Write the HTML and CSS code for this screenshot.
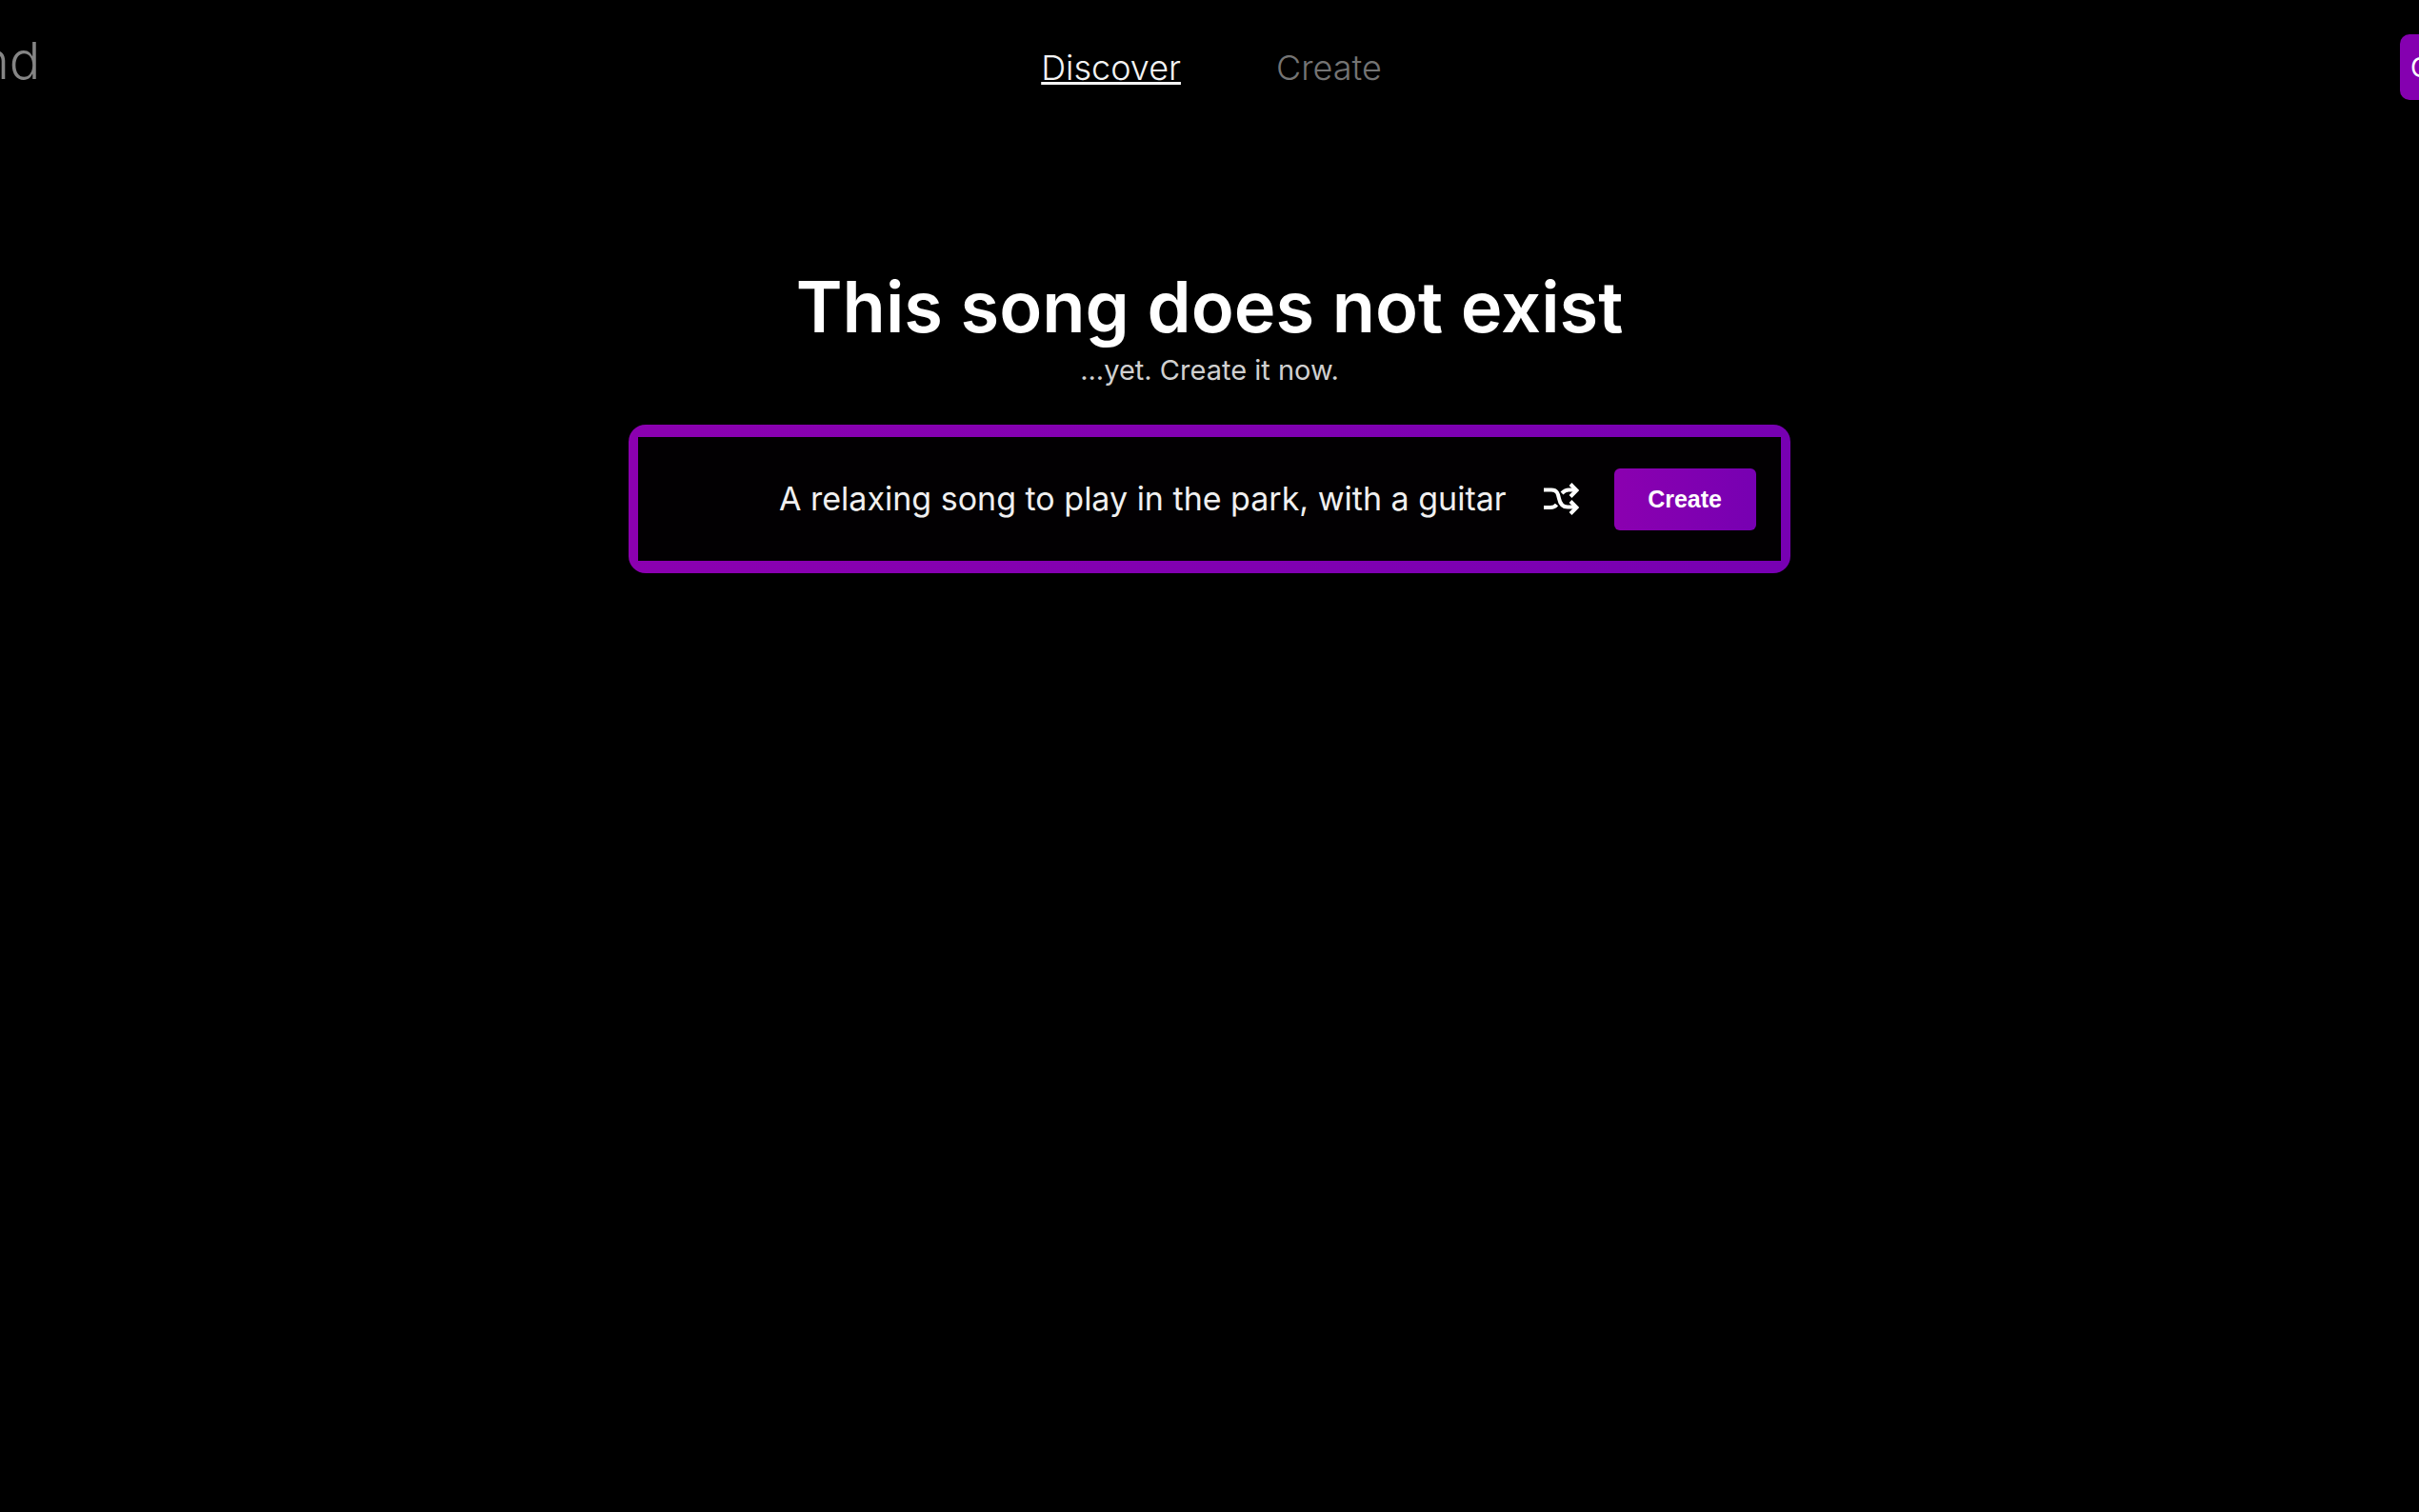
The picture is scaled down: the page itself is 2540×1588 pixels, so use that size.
FILE: index.html
```html
<!DOCTYPE html>
<html lang="en">
<head>
<meta charset="utf-8">
<title>This song does not exist</title>
<link rel="stylesheet" href="styles.css">
</head>
<body>
<header class="header">
  <a class="brand" href="#">nd</a>
  <nav class="nav">
    <a class="nav-link nav-link-active" href="#">Discover</a>
    <a class="nav-link" href="#">Create</a>
  </nav>
  <button class="account" type="button">C</button>
</header>
<main class="main">
  <h1 class="title">This song does not exist</h1>
  <p class="subtitle">...yet. Create it now.</p>
  <form class="prompt">
    <div class="prompt-inner">
      <input class="prompt-input" type="text" aria-label="Song description" value="A relaxing song to play in the park, with a guitar">
      <button class="shuffle" type="button" aria-label="Shuffle">
        <svg class="shuffle-icon" viewBox="0 0 38 34" fill="none" stroke="currentColor" stroke-width="4">
          <path d="M1 7.500h8c6 0 7 4 8 9s3 9 9 9h9M1 26h7c3 0 5-1 6.500-3M20 11c2-2 4-3.500 7-3.500h8"/>
          <path d="M29 1.500l6.500 6.500-6.500 6.500M29 19.500l6.500 6.500-6.500 6.500"/>
        </svg>
      </button>
      <button class="create" type="submit">Create</button>
    </div>
  </form>
</main>
</body>
</html>
```
FILE: styles.css
```css
* {
  box-sizing: border-box;
}

body {
  margin: 0;
  min-height: 100vh;
  overflow-x: hidden;
  background: #000;
  color: #fff;
  font-family: Inter, "Liberation Sans", sans-serif;
}

button,
input {
  border: 0;
  padding: 0;
  background: none;
  color: inherit;
  font-family: inherit;
}

.header {
  display: grid;
  grid-template-columns: 1fr auto 1fr;
  align-items: start;
  height: 142px;
  padding-top: 36px;
  overflow: hidden;
}

.brand {
  justify-self: start;
  margin-left: -22px;
  color: #858585;
  font-size: 54px;
  font-weight: 300;
  line-height: 56px;
  text-decoration: none;
}

.nav {
  display: flex;
  gap: 100px;
  padding-left: 4px;
}

.nav-link {
  color: #747474;
  font-size: 36px;
  font-weight: 300;
  line-height: 70px;
  text-decoration: none;
}

.nav-link-active {
  color: #f4f4f4;
  text-decoration: underline;
  text-decoration-thickness: 3px;
}

.account {
  justify-self: end;
  width: 160px;
  height: 69px;
  margin-right: -140px;
  padding-left: 11px;
  border-radius: 10px;
  background: #8500b0;
  font-size: 28px;
  text-align: left;
}

.main {
  display: flex;
  flex-direction: column;
  align-items: center;
  padding-top: 140px;
}

.title {
  margin: 0;
  font-size: 74px;
  font-weight: 600;
  line-height: 80px;
}

.subtitle {
  margin: 0;
  color: #d0d0d0;
  font-size: 29px;
  line-height: 53px;
}

.prompt {
  width: 48%;
  margin-top: 31px;
  padding: 13px 10px;
  border-radius: 18px;
  background: linear-gradient(90deg, #8b00b0, #7700b2);
}

.prompt-inner {
  display: flex;
  align-items: center;
  height: 130px;
  padding-right: 26px;
  background: #020002;
}

.prompt-input {
  flex: 1;
  min-width: 0;
  outline: 0;
  color: #f0f0f0;
  font-size: 34px;
  line-height: 44px;
  text-align: right;
}

.shuffle {
  display: flex;
  margin: 0 37px 0 38px;
}

.shuffle-icon {
  width: 38px;
  height: 34px;
}

.create {
  width: 149px;
  height: 65px;
  border-radius: 6px;
  background: linear-gradient(90deg, #8b00b0, #7700b2);
  font-family: "Liberation Sans", Arial, sans-serif;
  font-size: 25px;
  font-weight: 700;
}
```
